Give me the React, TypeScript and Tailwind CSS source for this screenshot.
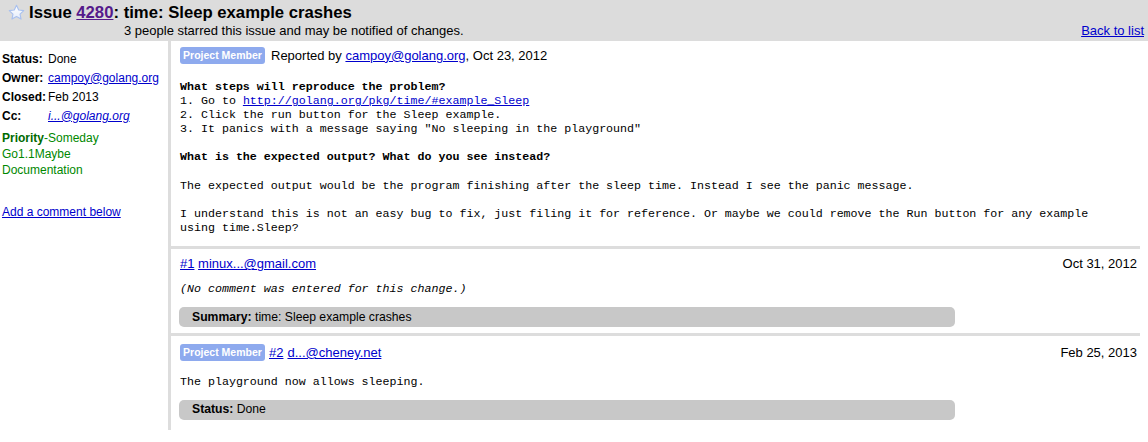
import React from 'react';

const sans = { fontFamily: '"Liberation Sans", Arial, sans-serif' };
const mono = { fontFamily: '"Liberation Mono", "Courier New", monospace' };

function Star() {
  return (
    <svg width="17" height="17" viewBox="0 0 24 24" className="shrink-0">
      <defs>
        <linearGradient id="starFill" x1="0" y1="0" x2="0" y2="1">
          <stop offset="0" stopColor="#ffffff" />
          <stop offset="1" stopColor="#e4ecfb" />
        </linearGradient>
      </defs>
      <path
        d="M12 1.8l3.1 6.6 7.1.9-5.2 4.9 1.4 7.1L12 17.8l-6.4 3.5 1.4-7.1-5.2-4.9 7.1-.9z"
        fill="url(#starFill)"
        stroke="#a9c1ef"
        strokeWidth="1.6"
        strokeLinejoin="round"
      />
    </svg>
  );
}

function MemberBadge() {
  return (
    <span className="inline-flex items-center h-[17px] w-[85px] justify-center rounded-[3px] bg-[#8eaaee] text-[10.5px] font-bold text-white shrink-0">
      Project Member
    </span>
  );
}

function Link({ children, className = '' }: { children: React.ReactNode; className?: string }) {
  return <a href="#" className={`text-[#0000cc] underline ${className}`}>{children}</a>;
}

function ChangeBox({ label, value }: { label: string; value: string }) {
  return (
    <div className="ml-[8px] w-[776px] h-[20px] rounded-[5px] bg-[#c8c8c8] pl-[13px] flex items-center text-[12.2px] text-black">
      <b>{label}</b>&nbsp;{value}
    </div>
  );
}

export default function App() {
  return (
    <div className="w-[1148px] h-[442px] bg-white text-black overflow-hidden" style={sans}>
      {/* Header */}
      <div className="bg-[#dcdcdc] h-[41px]">
        <div className="flex items-center h-[24px] pl-[8px] pt-[1px]">
          <Star />
          <h1 className="ml-[4px] text-[16.7px] font-bold leading-[20px]">
            Issue <a href="#" className="text-[#551a8b] underline">4280</a>: time: Sleep example crashes
          </h1>
        </div>
        <div className="flex justify-between items-center h-[14px] text-[13px] leading-[14px]">
          <span className="pl-[124px]">3 people starred this issue and may be notified of changes.</span>
          <Link className="mr-[4px]">Back to list</Link>
        </div>
      </div>

      <div className="flex">
        {/* Sidebar */}
        <div className="w-[168px] shrink-0 pl-[2px] pt-[8px] text-[12px]">
          <div className="grid grid-cols-[46px_1fr] auto-rows-[19px] items-center">
            <b>Status:</b>
            <span>Done</span>
            <b>Owner:</b>
            <Link>campoy@golang.org</Link>
            <b>Closed:</b>
            <span>Feb 2013</span>
            <b>Cc:</b>
            <Link className="italic">i...@golang.org</Link>
          </div>
          <div className="mt-[5px] leading-[16px] text-[#008800]">
            <div>
              <b className="text-[#006a00]">Priority</b>-Someday
            </div>
            <div>Go1.1Maybe</div>
            <div>Documentation</div>
          </div>
          <div className="mt-[25px]">
            <Link>Add a comment below</Link>
          </div>
        </div>

        {/* Main column */}
        <div className="w-[972px] shrink-0 border-l-[3px] border-[#dddddd] h-[389px]">
          {/* Description */}
          <div className="pl-[9px] pr-[9px] pt-[6px] pb-[11px]">
            <div className="flex items-center gap-[6px] h-[17px] text-[13px]">
              <MemberBadge />
              <span>
                Reported by <Link>campoy@golang.org</Link>, Oct 23, 2012
              </span>
            </div>
            <pre className="mt-[16px] text-[11.65px] leading-[14.1px] whitespace-pre-wrap" style={mono}>
              <b>What steps will reproduce the problem?</b>
              {'\n1. Go to '}
              <Link>http://golang.org/pkg/time/#example_Sleep</Link>
              {'\n2. Click the run button for the Sleep example.\n3. It panics with a message saying "No sleeping in the playground"\n\n'}
              <b>What is the expected output? What do you see instead?</b>
              {'\n\nThe expected output would be the program finishing after the sleep time. Instead I see the panic message.\n\nI understand this is not an easy bug to fix, just filing it for reference. Or maybe we could remove the Run button for any example\nusing time.Sleep?'}
            </pre>
          </div>

          {/* Comment 1 */}
          <div className="border-t-[3px] border-[#dddddd] w-[969px]">
            <div className="flex justify-between items-center h-[28px] pl-[9px] pr-[3px] pt-[2px] text-[13px]">
              <span>
                <Link>#1</Link> <Link>minux...@gmail.com</Link>
              </span>
              <span>Oct 31, 2012</span>
            </div>
            <pre className="pl-[9px] h-[30px] pt-[5px] text-[11.65px] leading-[14px] italic" style={mono}>
              (No comment was entered for this change.)
            </pre>
            <ChangeBox label="Summary:" value="time: Sleep example crashes" />
            <div className="h-[6px]" />
          </div>

          {/* Comment 2 */}
          <div className="border-t-[3px] border-[#dddddd] w-[969px]">
            <div className="flex justify-between items-center pl-[9px] pr-[3px] pt-[7px] text-[13px]">
              <span className="flex items-center gap-[4px] h-[19px]">
                <MemberBadge />
                <Link>#2</Link> <Link>d...@cheney.net</Link>
              </span>
              <span>Feb 25, 2013</span>
            </div>
            <pre className="pl-[9px] h-[37px] pt-[12px] text-[11.65px] leading-[14px]" style={mono}>
              The playground now allows sleeping.
            </pre>
            <ChangeBox label="Status:" value="Done" />
          </div>
        </div>
      </div>
    </div>
  );
}
